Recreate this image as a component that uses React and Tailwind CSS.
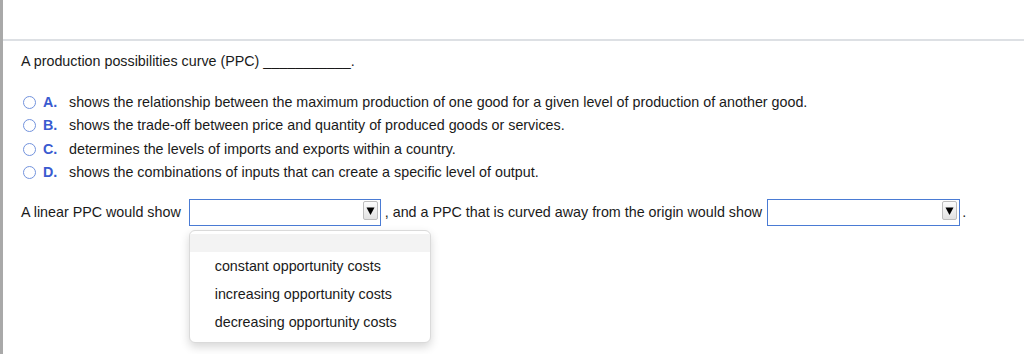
const options = [
  ["A.", "shows the relationship between the maximum production of one good for a given level of production of another good."],
  ["B.", "shows the trade-off between price and quantity of produced goods or services."],
  ["C.", "determines the levels of imports and exports within a country."],
  ["D.", "shows the combinations of inputs that can create a specific level of output."],
];

const choices = ["constant opportunity costs", "increasing opportunity costs", "decreasing opportunity costs"];

function Radio() {
  return <span className="inline-block w-[13px] h-[13px] rounded-full border-[1.5px] border-[#7393dd] bg-white" />;
}

function Select({ width, open }) {
  return (
    <span className={`relative inline-flex h-[27px] ${width} border border-[#4a7bd4] bg-white items-start justify-end pr-[2px] pt-[1px] align-middle`}>
      <span className="w-[15px] h-[19px] border border-[#bdbdbd] rounded-[2px] bg-gradient-to-b from-[#fcfcfc] to-[#e2e2e2] flex items-center justify-center">
        <svg width="9" height="10" viewBox="0 0 9 10">
          <path d="M0.5 1.5h8L4.5 9z" fill="#000" />
        </svg>
      </span>
      {open && (
        <div className="absolute left-[-1px] top-[30px] w-[242px] h-[113px] bg-white rounded-[6px] border border-[#dadada] shadow-[0_4px_10px_rgba(0,0,0,0.16)] pt-[3px] z-10">
          <div className="h-[18px] bg-[#f3f3f3]" />
          {choices.map((c) => (
            <div key={c} className="h-[28px] pt-[6px] pl-[25px] text-[14.3px] leading-[16px] text-[#1a1a1a]">
              {c}
            </div>
          ))}
        </div>
      )}
    </span>
  );
}

export default function App() {
  return (
    <div className="flex w-[1024px] h-[354px] bg-white text-[14.3px] text-[#1a1a1a] font-['Liberation_Sans',Arial,sans-serif]">
      <div className="w-[3px] bg-[#a9a9a9]" />
      <div className="flex-1 flex flex-col">
        <div className="h-[41px] border-b-2 border-[#dde0e4]" />
        <div className="pl-[18px] pt-[12px]">
          <p className="leading-[17px]">A production possibilities curve (PPC) ___________.</p>
          <div className="mt-[21px]">
            {options.map(([k, t]) => (
              <div key={k} className="flex items-center h-[23.3px]">
                <span className="ml-[2px] flex">
                  <Radio />
                </span>
                <span className="ml-[7px] w-[26px] font-bold text-[#3a5bd0]">{k}</span>
                <span>{t}</span>
              </div>
            ))}
          </div>
          <div className="flex items-center mt-[15px] h-[27px]">
            <span className="mr-[8px]">A linear PPC would show</span>
            <Select width="w-[192px]" open />
            <span className="ml-[4px] mr-[5px]">, and a PPC that is curved away from the origin would show</span>
            <Select width="w-[193px]" />
            <span className="ml-[2px]">.</span>
          </div>
        </div>
      </div>
    </div>
  );
}
